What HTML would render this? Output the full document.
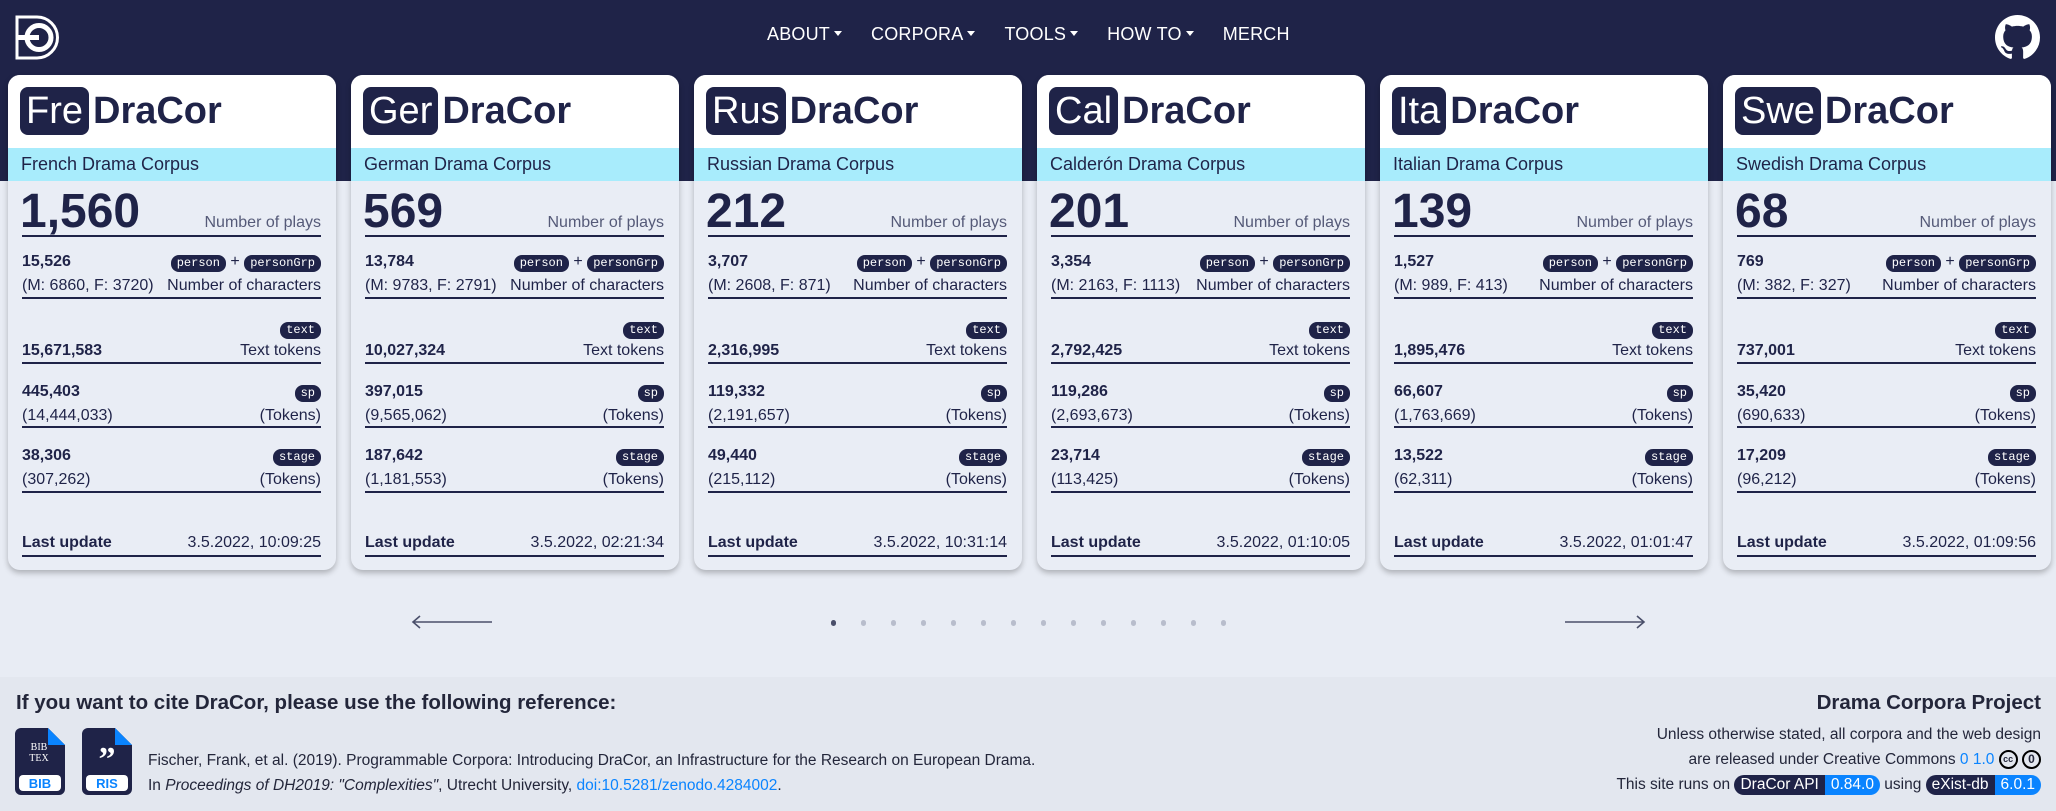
<!DOCTYPE html>
<html><head><meta charset="utf-8"><style>
*{box-sizing:border-box;margin:0;padding:0}
body{width:2056px;height:811px;overflow:hidden;background:#e8ecf4;font-family:"Liberation Sans",sans-serif;color:#1f2348;position:relative}
.top{position:absolute;left:0;top:0;width:2056px;height:181px;background:#1f2348}
.nav{position:absolute;top:24px;left:767px;display:flex;gap:0;color:#fff;font-size:18px;font-weight:500}
.nav span{margin-right:29px;letter-spacing:0.2px}
.car{display:inline-block;width:0;height:0;border-left:4px solid transparent;border-right:4px solid transparent;border-top:5px solid #fff;vertical-align:middle;margin-left:4px;margin-top:-3px}
.card{position:absolute;top:75px;width:328px;height:495px;background:#e9edf5;border-radius:12px;overflow:hidden;box-shadow:0 3px 6px rgba(0,0,0,.25)}
.hd{height:73px;background:#fff;position:relative}
.tt{position:absolute;left:12px;top:12px;display:flex;align-items:center;font-size:38px;line-height:48px}
.ab{height:48px;background:#1f2348;color:#fff;border-radius:8px;padding:0 6px;margin-right:4px}
.dc{font-weight:bold}
.band{height:33px;background:#a8ecfc;font-size:18px;line-height:33px;padding-left:13px}
.r{position:absolute;left:14px;right:15px;font-size:16px}
.ln{position:absolute;left:14px;right:15px;height:1.5px;background:#1f2348}
.b{font-weight:bold}
.rt{position:absolute;right:15px;text-align:right;font-size:16px}
.bd{display:inline-block;background:#1f2348;color:#fff;font-family:"Liberation Mono",monospace;font-size:12px;border-radius:8px;padding:0 6px;line-height:17px}
.big{position:absolute;left:12px;top:112px;font-size:48px;font-weight:bold;line-height:50px}
.foot{position:absolute;left:0;top:677px;width:2056px;height:134px;background:#e3e7ef}
.pill{display:inline-block;border-radius:10px;overflow:hidden;vertical-align:middle;line-height:20px;font-size:15.5px}
.pill span{display:inline-block;padding:0 6px;color:#fff}
</style></head><body>
<div class="top"></div>
<svg style="position:absolute;left:15px;top:15px" width="45" height="45" viewBox="0 0 45 45"><path d="M2 2H22A20.5 20.5 0 0 1 22 43H2Z" fill="none" stroke="#fff" stroke-width="3"/><circle cx="24" cy="22.5" r="12" fill="none" stroke="#fff" stroke-width="5"/><rect x="2" y="20" width="22" height="5" fill="#fff"/></svg>
<div class="nav"><span>ABOUT<i class="car"></i></span><span>CORPORA<i class="car"></i></span><span>TOOLS<i class="car"></i></span><span>HOW TO<i class="car"></i></span><span>MERCH</span></div>
<svg style="position:absolute;left:1995px;top:15px" width="45" height="45" viewBox="0 0 16 16"><path fill="#fff" d="M8 0C3.58 0 0 3.58 0 8c0 3.540 2.29 6.530 5.470 7.590.4.07.55-.17.55-.38 0-.19-.01-.82-.01-1.49-2.01.37-2.53-.49-2.690-.94-.09-.23-.48-.94-.82-1.130-.28-.15-.68-.52-.01-.53.63-.01 1.080.58 1.230.82.72 1.210 1.870.87 2.330.66.07-.52.28-.87.51-1.070-1.780-.2-3.640-.89-3.640-3.950 0-.87.31-1.590.82-2.150-.08-.2-.36-1.020.08-2.120 0 0 .67-.21 2.200.82.64-.18 1.320-.27 2-.27.68 0 1.360.09 2 .27 1.530-1.040 2.200-.82 2.200-.82.44 1.100.16 1.920.08 2.120.51.56.82 1.270.82 2.150 0 3.070-1.870 3.750-3.650 3.950.29.25.54.73.54 1.480 0 1.070-.01 1.930-.01 2.200 0 .21.15.46.55.38A8.013 8.013 0 0016 8c0-4.420-3.580-8-8-8z"/></svg>

<div id="cards"></div>
<script>
var d=[["Fre","French Drama Corpus","1,560","15,526","(M: 6860, F: 3720)","15,671,583","445,403","(14,444,033)","38,306","(307,262)","3.5.2022, 10:09:25"],
["Ger","German Drama Corpus","569","13,784","(M: 9783, F: 2791)","10,027,324","397,015","(9,565,062)","187,642","(1,181,553)","3.5.2022, 02:21:34"],
["Rus","Russian Drama Corpus","212","3,707","(M: 2608, F: 871)","2,316,995","119,332","(2,191,657)","49,440","(215,112)","3.5.2022, 10:31:14"],
["Cal","Calderón Drama Corpus","201","3,354","(M: 2163, F: 1113)","2,792,425","119,286","(2,693,673)","23,714","(113,425)","3.5.2022, 01:10:05"],
["Ita","Italian Drama Corpus","139","1,527","(M: 989, F: 413)","1,895,476","66,607","(1,763,669)","13,522","(62,311)","3.5.2022, 01:01:47"],
["Swe","Swedish Drama Corpus","68","769","(M: 382, F: 327)","737,001","35,420","(690,633)","17,209","(96,212)","3.5.2022, 01:09:56"]];
var h="";
d.forEach(function(c,i){
var L=8+i*343;
h+='<div class="card" style="left:'+L+'px"><div class="hd"><div class="tt"><span class="ab">'+c[0]+'</span><span class="dc">DraCor</span></div></div><div class="band">'+c[1]+'</div>'+
'<div class="big">'+c[2]+'</div><div class="rt" style="top:139px;color:#555a78">Number of plays</div><div class="ln" style="top:160px"></div>'+
'<div class="r b" style="top:178px">'+c[3]+'</div><div class="rt" style="top:178px"><span class="bd">person</span> + <span class="bd">personGrp</span></div>'+
'<div class="r" style="top:202px">'+c[4]+'</div><div class="rt" style="top:202px">Number of characters</div><div class="ln" style="top:222px"></div>'+
'<div class="rt" style="top:245px"><span class="bd">text</span></div><div class="r b" style="top:267px">'+c[5]+'</div><div class="rt" style="top:267px">Text tokens</div><div class="ln" style="top:287px"></div>'+
'<div class="rt" style="top:308px"><span class="bd">sp</span></div><div class="r b" style="top:308px">'+c[6]+'</div><div class="r" style="top:332px">'+c[7]+'</div><div class="rt" style="top:332px">(Tokens)</div><div class="ln" style="top:351px"></div>'+
'<div class="rt" style="top:372px"><span class="bd">stage</span></div><div class="r b" style="top:372px">'+c[8]+'</div><div class="r" style="top:396px">'+c[9]+'</div><div class="rt" style="top:396px">(Tokens)</div><div class="ln" style="top:416px"></div>'+
'<div class="r b" style="top:459px">Last update</div><div class="rt" style="top:459px">'+c[10]+'</div><div class="ln" style="top:480px"></div></div>';
});
document.getElementById("cards").innerHTML=h;
</script>
<svg style="position:absolute;left:410px;top:614px" width="84" height="16"><path d="M3 8H82M10 2L3 8L10 14" fill="none" stroke="#4a4f6a" stroke-width="1.6"/></svg>
<svg style="position:absolute;left:1563px;top:614px" width="84" height="16"><path d="M2 8H81M74 2L81 8L74 14" fill="none" stroke="#4a4f6a" stroke-width="1.6"/></svg>
<div id="dots"></div>
<script>var s="";for(var k=0;k<14;k++){s+='<div style="position:absolute;left:'+(831+k*30)+'px;top:620px;width:5px;height:6px;border-radius:3px;background:'+(k?'#b8bdcc':'#4a4f6a')+'"></div>'}document.getElementById("dots").innerHTML=s;</script>

<div class="foot"></div>
<div style="position:absolute;left:16px;top:691px;font-size:20.5px;font-weight:bold;color:#23263a">If you want to cite DraCor, please use the following reference:</div>
<svg style="position:absolute;left:15px;top:728px" width="50" height="67" viewBox="0 0 50 67">
<path d="M6 0H33L50 17V61A6 6 0 0 1 44 67H6A6 6 0 0 1 0 61V6A6 6 0 0 1 6 0Z" fill="#1f2348"/><path d="M33 0L50 17H33Z" fill="#0a84ff"/>
<text x="24" y="22" text-anchor="middle" fill="#fff" font-family="Liberation Serif" font-size="10">BIB</text><text x="24" y="33" text-anchor="middle" fill="#fff" font-family="Liberation Serif" font-size="10">TEX</text>
<rect x="4" y="47" width="42" height="16" rx="4" fill="#fff"/><text x="25" y="60" text-anchor="middle" fill="#0a84ff" font-family="Liberation Sans" font-weight="bold" font-size="13">BIB</text></svg>
<svg style="position:absolute;left:82px;top:728px" width="50" height="67" viewBox="0 0 50 67">
<path d="M6 0H33L50 17V61A6 6 0 0 1 44 67H6A6 6 0 0 1 0 61V6A6 6 0 0 1 6 0Z" fill="#1f2348"/><path d="M33 0L50 17H33Z" fill="#0a84ff"/>
<text x="25" y="42" text-anchor="middle" fill="#fff" font-family="Liberation Serif" font-weight="bold" font-size="34">&#8221;</text>
<rect x="4" y="47" width="42" height="16" rx="4" fill="#fff"/><text x="25" y="60" text-anchor="middle" fill="#0a84ff" font-family="Liberation Sans" font-weight="bold" font-size="13">RIS</text></svg>
<div style="position:absolute;left:148px;top:748px;font-size:15.5px;color:#23263a;line-height:25px">Fischer, Frank, et al. (2019). Programmable Corpora: Introducing DraCor, an Infrastructure for the Research on European Drama.<br>In <i>Proceedings of DH2019: "Complexities"</i>, Utrecht University, <span style="color:#0a84ff">doi:10.5281/zenodo.4284002</span>.</div>
<div style="position:absolute;right:15px;top:690px;text-align:right;color:#23263a">
<div style="font-size:20.5px;font-weight:bold;line-height:26px">Drama Corpora Project</div>
<div style="font-size:15.5px;line-height:25px;margin-top:6px">Unless otherwise stated, all corpora and the web design</div>
<div style="font-size:15.5px;line-height:25px">are released under Creative Commons <span style="color:#0a84ff">0 1.0</span> <span style="display:inline-block;width:19px;height:19px;border:2px solid #000;border-radius:50%;font-size:9px;font-weight:bold;line-height:15px;text-align:center;vertical-align:middle">cc</span> <span style="display:inline-block;width:19px;height:19px;border:2px solid #000;border-radius:50%;font-size:12px;font-weight:bold;line-height:15px;text-align:center;vertical-align:middle">0</span></div>
<div style="font-size:15.5px;line-height:25px">This site runs on <span class="pill"><span style="background:#1f2348">DraCor API</span><span style="background:#0a84ff">0.84.0</span></span> using <span class="pill"><span style="background:#1f2348">eXist-db</span><span style="background:#0a84ff">6.0.1</span></span></div>
</div>
</body></html>
